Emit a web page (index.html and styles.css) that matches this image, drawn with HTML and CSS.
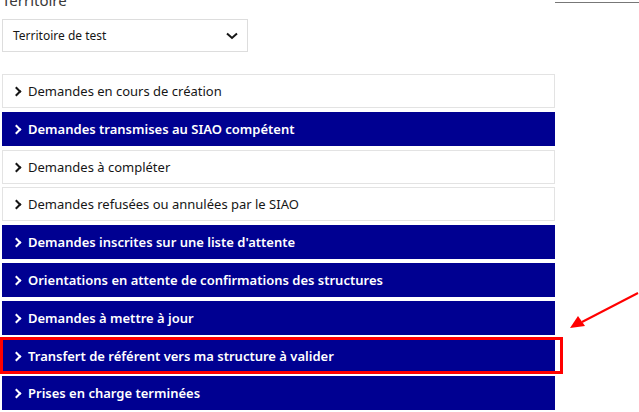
FILE: index.html
```html
<!DOCTYPE html>
<html lang="fr">
<head>
    <meta charset="UTF-8">
    <title>Demandes</title>
    <link rel="stylesheet" href="styles.css">
</head>
<body>
    <div class="topline"></div>

    <div class="page">
        <label class="field-label" for="territoire">Territoire</label>
        <div class="select">
            <span>Territoire de test</span>
            <svg class="select-chevron" width="12" height="8" viewBox="0 0 12 8">
                <path d="M1 1.5 L6 6 L11 1.5" fill="none" stroke="#161616" stroke-width="2"/>
            </svg>
        </div>

        <ul class="accordion">
            <li class="item">Demandes en cours de création</li>
            <li class="item item-active">Demandes transmises au SIAO compétent</li>
            <li class="item">Demandes à compléter</li>
            <li class="item">Demandes refusées ou annulées par le SIAO</li>
            <li class="item item-active">Demandes inscrites sur une liste d'attente</li>
            <li class="item item-active">Orientations en attente de confirmations des structures</li>
            <li class="item item-active">Demandes à mettre à jour</li>
            <li class="item item-active item-marked">Transfert de référent vers ma structure à valider</li>
            <li class="item item-active">Prises en charge terminées</li>
        </ul>
    </div>

    <svg class="arrow" width="80" height="50" viewBox="0 0 80 50">
        <line x1="76" y1="4" x2="20" y2="33" stroke="#f00" stroke-width="2"/>
        <polygon points="8,39 16,27 23,37" fill="#f00"/>
    </svg>
</body>
</html>
```

FILE: styles.css
```css
body {
    margin: 0;
    font-family: "Noto Sans", Arial, sans-serif;
    color: #161616;
    background-color: #ffffff;
    position: relative;
    width: 639px;
    height: 412px;
    overflow: hidden;
}
.topline {
    position: absolute;
    top: 2px;
    left: 555px;
    width: 84px;
    height: 1px;
    background-color: #777;
}
.page {
    margin-top: -10px;
    padding-left: 2px;
    width: 553px;
}
.field-label {
    display: block;
    font-size: 15px;
    line-height: 20px;
    color: #3a3a3a;
    margin-bottom: 9px;
}
.select {
    height: 31px;
    border: 1px solid #ddd;
    display: flex;
    align-items: center;
    justify-content: space-between;
    padding: 0 8px 0 10px;
    width: 226px;
    font-size: 12px;
}
.select-chevron {
    margin-right: 1px;
}
.accordion {
    list-style: none;
    margin: 22px 0 0 0;
    padding: 0;
}
.item {
    height: 32px;
    border: 1px solid #e3e3e3;
    margin-bottom: 3.8px;
    display: flex;
    align-items: center;
    padding-left: 25px;
    font-size: 13px;
    position: relative;
}
.item:before {
    content: "";
    position: absolute;
    left: 10px;
    top: 13px;
    width: 5px;
    height: 5px;
    border-right: 2px solid currentColor;
    border-top: 2px solid currentColor;
    transform: rotate(45deg);
}
.item-active {
    background-color: #000091;
    border-color: #000091;
    color: #ffffff;
    font-weight: 600;
}
.item-marked:after {
    content: "";
    position: absolute;
    top: -3px;
    bottom: -2px;
    left: -3px;
    right: -9px;
    border: 3px solid #ff0000;
}
.arrow {
    position: absolute;
    left: 562px;
    top: 289px;
}
```
